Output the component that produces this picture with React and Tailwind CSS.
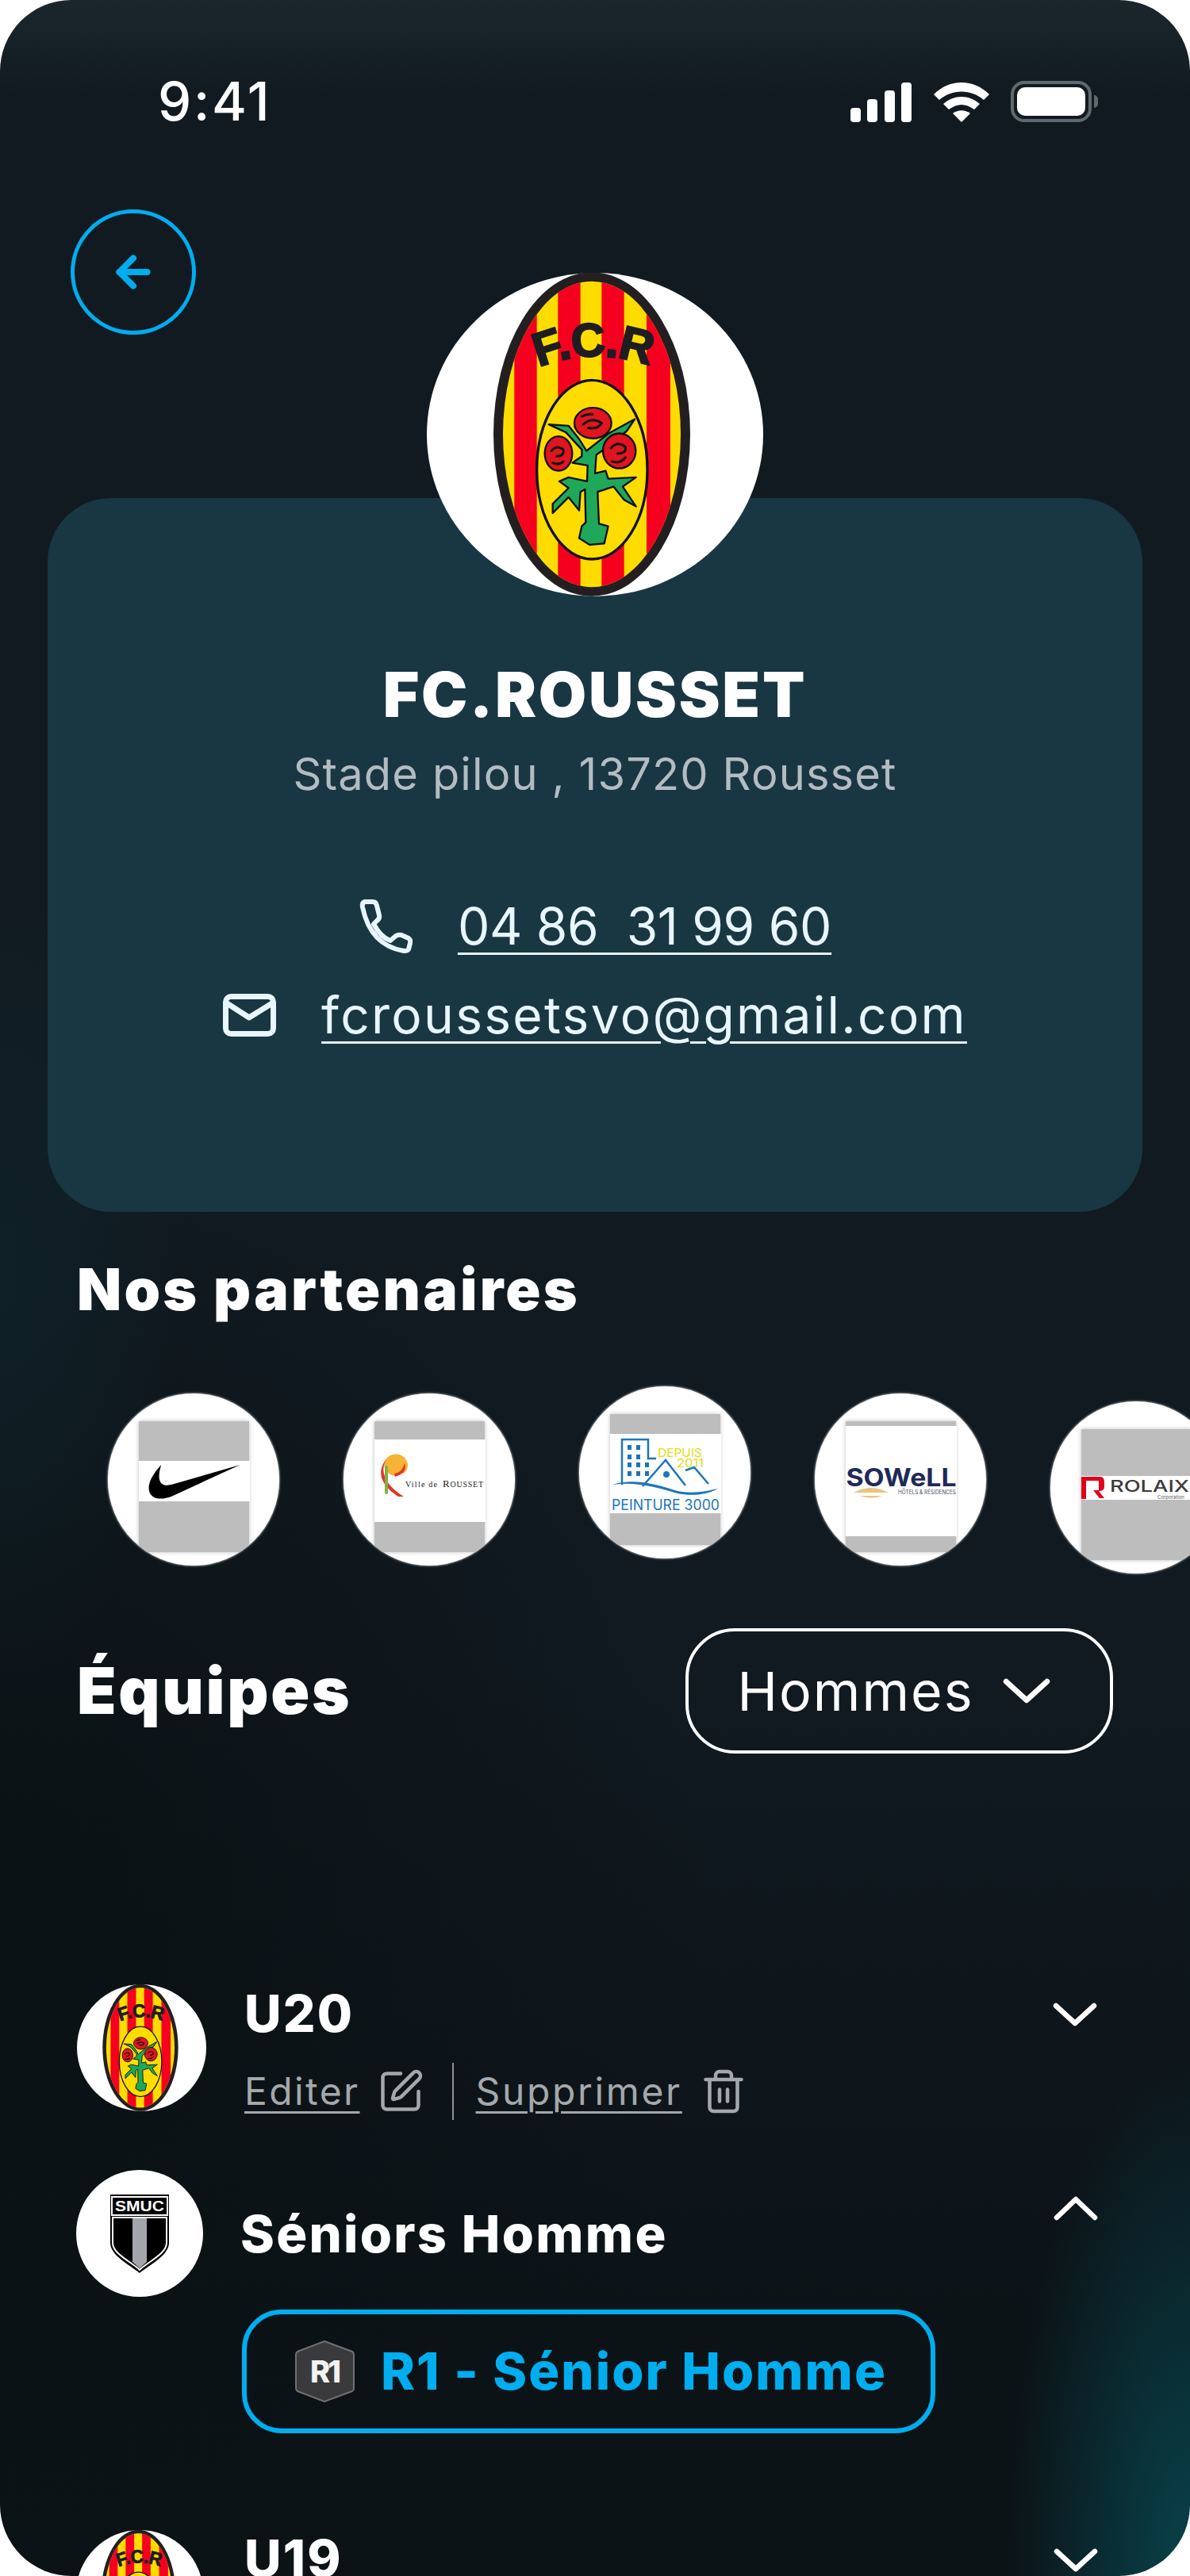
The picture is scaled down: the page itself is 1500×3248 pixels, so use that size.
import { ArrowLeft, SquarePen, Trash2 } from 'lucide-react';

function Crest() {
  return (
    <svg viewBox="114 72 1272 1223" preserveAspectRatio="none" className="w-full h-full block">
      <defs>
        <clipPath id="shield"><ellipse cx="738" cy="682" rx="336" ry="578" /></clipPath>
        <path id="arc" d="M530 432 Q740 345 970 428" />
      </defs>
      <ellipse cx="750" cy="683" rx="636" ry="611" fill="#fff" />
      <ellipse cx="738" cy="682" rx="372" ry="612" fill="#231f20" />
      <g clipPath="url(#shield)">
        <rect x="380" y="80" width="720" height="1210" fill="#ffdc00" />
        <rect x="445" y="80" width="85" height="1210" fill="#f6001f" />
        <rect x="610" y="80" width="85" height="1210" fill="#f6001f" />
        <rect x="775" y="80" width="85" height="1210" fill="#f6001f" />
        <rect x="945" y="80" width="90" height="1210" fill="#f6001f" />
      </g>
      <text fontFamily="Liberation Sans, sans-serif" fontWeight="700" fontSize="178" fill="#1d1d22" stroke="#1d1d22" strokeWidth="7" letterSpacing="-4">
        <textPath href="#arc" startOffset="8">F.C.R</textPath>
      </text>
      <ellipse cx="739" cy="816" rx="209" ry="338" fill="#ffdc00" stroke="#111" strokeWidth="10" />
      <path
        fill="#1fa85a"
        stroke="#111"
        strokeWidth="7"
        strokeLinejoin="round"
        d="M575 645 L650 650 L690 700 L718 745 L800 680 L900 625 L870 670 L790 735 L755 760 L750 830 L790 820 L800 850 L905 845 L855 880 L905 955 L860 930 L820 880 L760 900 L765 1020 L800 1030 L785 1095 L730 1100 L690 1075 L700 1030 L715 1015 L712 890 L695 900 L690 970 L650 920 L590 980 L590 945 L650 885 L615 860 L650 845 L720 860 L722 800 L665 790 L700 765 L700 740 L640 675 Z"
      />
      <g fill="#e0151f" stroke="#111" strokeWidth="7">
        <ellipse cx="742" cy="640" rx="70" ry="58" />
        <ellipse cx="612" cy="755" rx="52" ry="65" />
        <ellipse cx="842" cy="745" rx="62" ry="66" />
      </g>
      <g fill="none" stroke="#111" strokeWidth="9" strokeLinecap="round">
        <path d="M705 645 q35 -30 70 -5 q-15 25 -50 18 M700 615 q20 -10 40 -8 M585 745 q20 -25 45 -5 q5 25 -25 25 M590 790 q25 10 40 -5 M810 735 q25 -30 55 -5 q5 25 -30 25 M815 785 q30 10 50 -15" />
      </g>
    </svg>
  );
}

function Shield() {
  return (
    <svg viewBox="0 0 76 100" className="w-[76px] h-[100px] block">
      <path d="M1 1 H75 V62 C75 78 50 90 38 100 C26 90 1 78 1 62 Z" fill="#000" />
      <rect x="3" y="4" width="70" height="23" fill="#000" stroke="#fff" strokeWidth="2" />
      <text x="38" y="22" textAnchor="middle" fontFamily="Liberation Sans, sans-serif" fontSize="19" fontWeight="700" fill="#fff" textLength="62" lengthAdjust="spacingAndGlyphs">SMUC</text>
      <path d="M4 30 H72 V62 C72 76 48 86 38 96 C28 86 4 76 4 62 Z" fill="#000" stroke="#fff" strokeWidth="2" />
      <path d="M29 31 H47 V86 L38 94 L29 86 Z" fill="#a2a5ac" />
    </svg>
  );
}

function Chevron({ up, className }) {
  return (
    <svg viewBox="0 0 56 30" className={className} fill="none" stroke="#fff" strokeWidth="6.5" strokeLinecap="round" strokeLinejoin="round">
      <path d={up ? 'M4 27 L28 4 L52 27' : 'M4 4 L28 26 L52 4'} />
    </svg>
  );
}

function Partner({ logo, logoClass, className }) {
  return (
    <div className={'w-[216px] h-[217px] shrink-0 rounded-full bg-white overflow-hidden shadow-[0_0_3px_#fff] flex justify-center pt-[35px] ' + className}>
      <div className="w-[139px] h-[165px] bg-[#bdbdbd] shadow-[0_0_5px_#bdbdbd]">
        <div className={'w-[140px] bg-white ' + logoClass}>{logo}</div>
      </div>
    </div>
  );
}

const nike = (
  <svg viewBox="0 0 390 155" className="w-full h-full block">
    <path d="M68 15 C30 55 12 95 24 122 C36 148 72 150 108 136 L370 15 L112 90 C72 102 46 85 68 15 Z" fill="#000" />
  </svg>
);

const rousset = (
  <svg viewBox="0 0 140 104" className="w-full h-full block">
    <path d="M12 32 A15 14 0 1 1 38 42 L26 46 A16 16 0 0 1 12 32 Z" fill="#f6b335" />
    <path d="M15 25 C6 40 14 58 37 72 L30 72 C8 58 2 40 15 25 Z" fill="#e2332b" />
    <path d="M38 30 C41 38 36 44 26 47 L25 43 C32 42 36 38 38 30 Z" fill="#e2332b" />
    <rect x="13" y="33" width="4" height="36" rx="2" fill="#7cb342" />
    <text x="39" y="60" fontFamily="Liberation Serif, serif" fontSize="10" fill="#222" textLength="40" lengthAdjust="spacing">Ville de</text>
    <text x="86" y="60" fontFamily="Liberation Serif, serif" fontSize="13" fill="#222" textLength="51" lengthAdjust="spacing">R<tspan fontSize="10">OUSSET</tspan></text>
  </svg>
);

const peinture = (
  <svg viewBox="0 0 140 100" className="w-full h-full block">
    <path d="M15 64 V7 H48 V31 H58" fill="none" stroke="#1b75bb" strokeWidth="2.5" />
    <g fill="#1b75bb">
      <rect x="22" y="14" width="5" height="6" /><rect x="33" y="14" width="5" height="6" />
      <rect x="22" y="26" width="5" height="6" /><rect x="33" y="26" width="5" height="6" />
      <rect x="22" y="36" width="5" height="6" /><rect x="33" y="36" width="5" height="6" /><rect x="44" y="36" width="5" height="6" />
      <rect x="22" y="47" width="5" height="6" /><rect x="33" y="47" width="5" height="6" /><rect x="44" y="47" width="5" height="6" />
    </g>
    <path d="M41 66 L70 33 L95 65 M95 46 L106 42 L124 63" fill="none" stroke="#1b75bb" strokeWidth="2.5" />
    <circle cx="71" cy="51" r="4" fill="#1b75bb" />
    <path d="M3 64 C30 55 60 64 85 72 C105 76 122 72 136 69 C120 78 100 78 85 75 C55 66 30 60 3 64 Z" fill="#1b75bb" />
    <text x="60" y="29" fontFamily="Inter, sans-serif" fontSize="15" fill="#e3dc12" textLength="56" lengthAdjust="spacingAndGlyphs">DEPUIS</text>
    <text x="84" y="42" fontFamily="Inter, sans-serif" fontSize="14" fill="#e3dc12" textLength="34" lengthAdjust="spacingAndGlyphs">2011</text>
    <text x="70" y="96" textAnchor="middle" fontFamily="Inter, sans-serif" fontSize="18" fill="#1b75bb" textLength="136" lengthAdjust="spacingAndGlyphs">PEINTURE 3000</text>
  </svg>
);

const sowell = (
  <svg viewBox="0 0 140 139" className="w-full h-full block">
    <text x="70" y="76" textAnchor="middle" fontFamily="Inter, sans-serif" fontWeight="700" fontSize="31" fill="#1e2a58" textLength="139" lengthAdjust="spacingAndGlyphs">SOWeLL</text>
    <path d="M10 84 Q31 72 54 84 Z M18 88 H46 Q32 93 18 88 Z" fill="#e8c47c" />
    <text x="139" y="86" textAnchor="end" fontFamily="Inter, sans-serif" fontSize="7" fill="#4a5070" textLength="73" lengthAdjust="spacingAndGlyphs">HÔTELS &amp; RÉSIDENCES</text>
  </svg>
);

const rolaix = (
  <svg viewBox="0 0 140 30" className="w-full h-full block">
    <path d="M0 1 H24 Q29 1 29 8 V14 Q29 19 22 19 L29 28 H23 L15 18 H22 V6 H6 V29 H0 Z" fill="#e2001a" />
    <text x="36" y="20" fontFamily="Inter, sans-serif" fontWeight="500" fontSize="20" fill="#3b3b3b" textLength="100" lengthAdjust="spacingAndGlyphs">ROLAIX</text>
    <text x="96" y="29" fontFamily="Inter, sans-serif" fontSize="6" fill="#555">Corporation</text>
  </svg>
);

export default function App() {
  return (
    <div className="w-[1500px] h-[3248px] overflow-hidden bg-white font-['Inter',sans-serif]">
      <div className="h-full rounded-[90px] overflow-hidden flex flex-col text-white bg-[#111a21] bg-[radial-gradient(ellipse_230px_650px_at_100%_100%,rgba(8,78,88,0.8),transparent),linear-gradient(180deg,#1b262d_0px,rgba(27,38,45,0)_120px),radial-gradient(ellipse_220px_500px_at_0%_50%,rgba(14,52,62,0.3),transparent),radial-gradient(ellipse_900px_1000px_at_0%_75%,#0a1114,transparent),linear-gradient(180deg,rgba(11,19,23,0)_65%,#0b1317_90%)]">
        <div className="mt-[100px] h-[56px] flex items-center justify-between pl-[199px] pr-[116px]">
          <span className="text-[67px] leading-[56px] font-medium tracking-[0.04em]">9:41</span>
          <div className="flex items-end gap-[27px]">
            <svg viewBox="0 0 78 50" className="w-[78px] h-[50px]" fill="#fff">
              <rect x="0" y="32" width="13" height="18" rx="4" />
              <rect x="21" y="21" width="13" height="29" rx="4" />
              <rect x="43" y="10" width="13" height="40" rx="4" />
              <rect x="64" y="0" width="13" height="50" rx="4" />
            </svg>
            <svg viewBox="0 0 70 50" className="w-[70px] h-[50px]" fill="#fff">
              <path d="M0 15 C20 -5 50 -5 70 15 L63 22 C47 8 23 8 7 22 Z" />
              <path d="M12 27 C26 15 44 15 58 27 L51 34 C40 26 30 26 19 34 Z" />
              <path d="M24 39 C31 34 39 34 46 39 L35 50 Z" />
            </svg>
            <div className="flex items-center gap-[3px]">
              <div className="w-[102px] h-[52px] rounded-[17px] border-[4px] border-[#5f6a6e] p-[4px]">
                <div className="w-full h-full rounded-[10px] bg-white" />
              </div>
              <div className="w-[5px] h-[16px] rounded-r-full bg-[#5f6a6e]" />
            </div>
          </div>
        </div>

        <button className="mt-[108px] ml-[89px] w-[158px] h-[158px] shrink-0 rounded-full border-[5px] border-[#00aeef] flex items-center justify-center text-[#00aeef]">
          <ArrowLeft size={60} strokeWidth={3.2} />
        </button>

        <div className="-mt-[78px] ml-[538px] w-[424px] h-[408px] shrink-0 relative z-10">
          <Crest />
        </div>

        <div className="-mt-[124px] mx-[60px] h-[900px] shrink-0 rounded-[80px] bg-[#193643] flex flex-col items-center pt-[208px] text-[#e8f6ff]">
          <h1 className="text-[78px] leading-[80px] font-black tracking-[0.035em] text-white">FC.ROUSSET</h1>
          <p className="mt-[30px] text-[56px] leading-[60px] text-[#b3bcc1] tracking-[0.02em]">Stade pilou , 13720 Rousset</p>
          <div className="mt-[130px] h-[64px] flex items-center gap-[57px]">
            <svg viewBox="0 0 68 68" className="w-[68px] h-[68px] shrink-0" fill="none" stroke="currentColor" strokeWidth="6" strokeLinejoin="round">
              <path d="M8 3 L18 3 Q22 3 23 8 L26 20 Q27 24 23 27 L19 31 Q28 48 40 52 L47 46 Q50 44 54 45 L63 49 Q66 51 65 55 L63 63 Q62 65 57 65 Q15 58 5 10 Q4 4 8 3 Z" />
            </svg>
            <a className="text-[64px] leading-[64px] whitespace-pre underline underline-offset-[10px] decoration-[3px] tracking-[-0.005em]">04 86  31 99 60</a>
          </div>
          <div className="mt-[48px] h-[64px] flex items-center gap-[57px]">
            <svg viewBox="0 0 67 54" className="w-[67px] h-[54px] shrink-0" fill="none" stroke="currentColor" strokeWidth="7" strokeLinecap="round" strokeLinejoin="round">
              <rect x="3.5" y="3.5" width="60" height="47" rx="7" />
              <path d="M5 12 L33 30 L62 12" />
            </svg>
            <a className="text-[64px] leading-[64px] underline underline-offset-[10px] decoration-[3px] tracking-[0.036em]">fcroussetsvo@gmail.com</a>
          </div>
        </div>

        <h2 className="mt-[58px] ml-[97px] text-[73px] leading-[80px] font-black tracking-[0.044em]">Nos partenaires</h2>

        <div className="mt-[82px] h-[236px] shrink-0 flex items-start gap-[81px] pl-[136px]">
          <Partner className="mt-[9px]" logoClass="mt-[50px] h-[51px]" logo={nike} />
          <Partner className="mt-[9px]" logoClass="mt-[23px] h-[104px]" logo={rousset} />
          <Partner className="" logoClass="mt-[25px] h-[100px]" logo={peinture} />
          <Partner className="mt-[9px]" logoClass="mt-[6px] h-[139px]" logo={sowell} />
          <Partner className="mt-[19px]" logoClass="mt-[59px] h-[30px]" logo={rolaix} />
        </div>

        <div className="mt-[69px] h-[158px] shrink-0 flex items-center justify-between pl-[97px] pr-[97px]">
          <h2 className="text-[81px] leading-[80px] font-black tracking-[0.033em]">Équipes</h2>
          <button className="w-[539px] h-[158px] rounded-[62px] border-[4px] border-white flex items-center justify-center gap-[36px] pr-[14px]">
            <span className="text-[68px] tracking-[0.03em]">Hommes</span>
            <Chevron className="w-[60px] h-[34px]" />
          </button>
        </div>

        <div className="mt-[291px] h-[170px] shrink-0 flex items-start pl-[97px] pr-[117px]">
          <div className="w-[163px] h-[160px] shrink-0"><Crest /></div>
          <div className="ml-[48px] flex-1">
            <div className="mt-[7px] text-[64px] leading-[60px] font-extrabold tracking-[0.035em]">U20</div>
            <div className="mt-[33px] h-[70px] flex items-center text-[#a5a8aa]">
              <a className="text-[48px] underline underline-offset-[8px] decoration-[3px] tracking-[0.05em]">Editer</a>
              <SquarePen size={60} strokeWidth={1.8} className="ml-[21px]" />
              <div className="ml-[35px] w-[2px] h-[72px] bg-[#8d9194]" />
              <a className="ml-[28px] text-[48px] underline underline-offset-[8px] decoration-[3px] tracking-[0.055em]">Supprimer</a>
              <Trash2 size={60} strokeWidth={1.8} className="ml-[22px]" />
            </div>
          </div>
          <Chevron className="mt-[23px] w-[56px] h-[30px]" />
        </div>

        <div className="mt-[64px] h-[160px] shrink-0 flex items-start pl-[96px] pr-[116px]">
          <div className="w-[160px] h-[160px] shrink-0 rounded-full bg-white flex justify-center pt-[30px]"><Shield /></div>
          <div className="ml-[47px] mt-[51px] flex-1 text-[65px] leading-[60px] font-extrabold tracking-[0.035em]">Séniors Homme</div>
          <Chevron up className="mt-[32px] w-[56px] h-[32px]" />
        </div>

        <button className="mt-[16px] ml-[305px] w-[874px] h-[156px] shrink-0 rounded-[50px] border-[6px] border-[#00aeef] flex items-center pl-[61px] gap-[33px] text-[#00aeef]">
          <svg viewBox="0 0 75 78" className="w-[75px] h-[78px] shrink-0">
            <path d="M37 1 L72 14 Q74 15 74 18 V60 Q74 63 72 64 L37 77 L3 64 Q1 63 1 60 V18 Q1 15 3 14 Z" fill="#3a3a3c" stroke="#6f6f70" strokeWidth="2" />
            <text x="37" y="53" textAnchor="middle" fontFamily="Inter, sans-serif" fontSize="38" fontWeight="800" fill="#f3f3f3" letterSpacing="-3">R1</text>
          </svg>
          <span className="text-[65px] leading-[70px] font-extrabold tracking-[0.032em]">R1 - Sénior Homme</span>
        </button>

        <div className="mt-[122px] h-[160px] shrink-0 flex items-start pl-[96px] pr-[116px]">
          <div className="w-[160px] h-[160px] shrink-0"><Crest /></div>
          <div className="ml-[52px] mt-[6px] flex-1 text-[64px] leading-[60px] font-extrabold tracking-[0.035em]">U19</div>
          <Chevron className="mt-[23px] w-[56px] h-[30px]" />
        </div>
      </div>
    </div>
  );
}
